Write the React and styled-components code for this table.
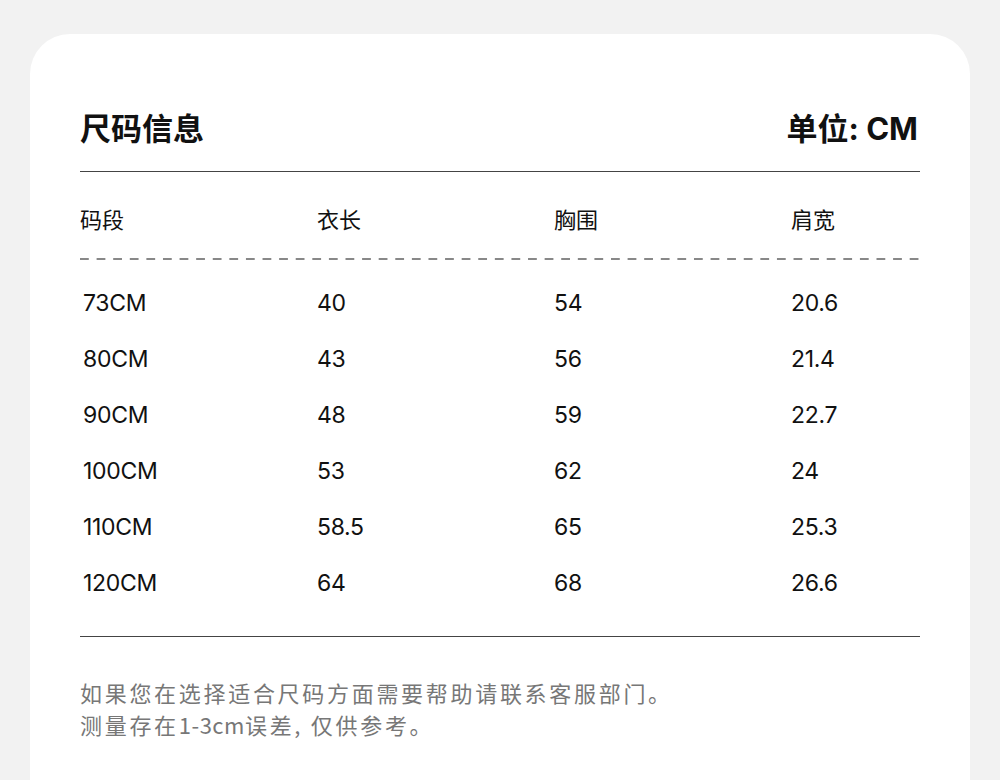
import styled, { createGlobalStyle } from "styled-components";

const GlobalStyle = createGlobalStyle`
  html, body {
    margin: 0;
    padding: 0;
    background: #f2f2f2;
    font-family: Inter, "Noto Sans CJK SC", sans-serif;
    overflow: hidden;
  }
`;

const Page = styled.div`
  padding: 34px 30px 0 30px;
  height: 780px;
  box-sizing: border-box;
`;

const Card = styled.div`
  background: #fff;
  border-radius: 40px 40px 0 0;
  padding: 72px 50px 80px 50px;
  min-height: 800px;
  box-sizing: border-box;
`;

const TitleBar = styled.div`
  display: flex;
  align-items: center;
  justify-content: space-between;
  height: 40px;
  padding-bottom: 25px;
  border-bottom: 1px solid #444;
`;

const Title = styled.h1`
  margin: 0;
  font-family: "Noto Sans CJK SC", sans-serif;
  font-size: 31px;
  font-weight: 700;
  color: #111;
`;

const Unit = styled.div`
  font-family: Inter, "Noto Sans CJK SC", sans-serif;
  font-size: 31px;
  font-weight: 700;
  color: #111;
  margin-right: 2px;
`;

const Row = styled.div`
  display: grid;
  grid-template-columns: 237px 237px 237px 1fr;
  align-items: center;
  height: ${(p) => p.$height}px;
`;

const HeadRow = styled(Row)`
  padding-top: 4px;
  height: 82px;
  background-image: linear-gradient(to right, #888 0 9px, transparent 9px);
  background-size: 16.6px 2px;
  background-repeat: repeat-x;
  background-position: 0 100%;
  padding-bottom: 2px;
`;

const HeadCell = styled.div`
  font-family: "Noto Sans CJK SC", sans-serif;
  font-size: 22px;
  color: #111;
  padding-top: 2px;
`;

const Body = styled.div`
  padding: 15px 0 25px 0;
  border-bottom: 1px solid #444;
`;

const Cell = styled.div`
  font-family: Inter, "Noto Sans CJK SC", sans-serif;
  font-size: 23px;
  color: #111;
  letter-spacing: -0.3px;
  padding-left: ${(p) => (p.$first ? 3 : 0)}px;
`;

const Note = styled.p`
  margin: 39px 0 0 0;
  font-family: "Noto Sans CJK SC", sans-serif;
  font-size: 22px;
  line-height: 32px;
  color: #777;
  letter-spacing: 2.7px;
`;

const Latin = styled.span`
  letter-spacing: 0.5px;
`;

const headers = ["码段", "衣长", "胸围", "肩宽"];

const rows = [
  ["73CM", "40", "54", "20.6"],
  ["80CM", "43", "56", "21.4"],
  ["90CM", "48", "59", "22.7"],
  ["100CM", "53", "62", "24"],
  ["110CM", "58.5", "65", "25.3"],
  ["120CM", "64", "68", "26.6"],
];

export default function App() {
  return (
    <Page>
      <GlobalStyle />
      <Card>
        <TitleBar>
          <Title>尺码信息</Title>
          <Unit>单位: CM</Unit>
        </TitleBar>
        <HeadRow>
          {headers.map((h) => (
            <HeadCell key={h}>{h}</HeadCell>
          ))}
        </HeadRow>
        <Body>
          {rows.map((r) => (
            <Row key={r[0]} $height={56}>
              {r.map((v, i) => (
                <Cell key={i} $first={i === 0}>{v}</Cell>
              ))}
            </Row>
          ))}
        </Body>
        <Note>
          如果您在选择适合尺码方面需要帮助请联系客服部门。
          <br />
          测量存在<Latin>1-3cm</Latin>误差, 仅供参考。
        </Note>
      </Card>
    </Page>
  );
}
